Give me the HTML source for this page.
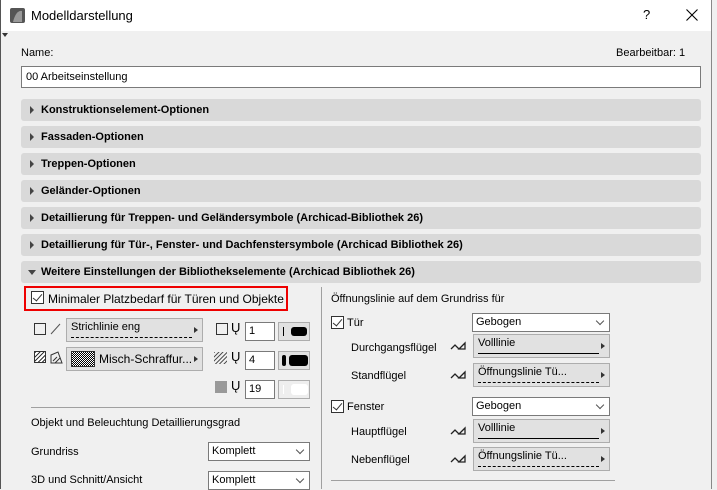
<!DOCTYPE html><html><head><meta charset="utf-8"><style>
*{box-sizing:border-box;margin:0;padding:0}
body{width:717px;height:489px;overflow:hidden;background:#f0f0f0;font-family:"Liberation Sans",sans-serif;font-size:11px;color:#000;position:relative}
.a{position:absolute;white-space:nowrap}
.hdr{position:absolute;left:21px;width:680px;height:22px;background:#d9d9d9;border-radius:3px;font-weight:bold;font-size:11px;line-height:22px;padding-left:20px}
.hdr:before{content:"";position:absolute;left:9px;top:7px;border-left:4px solid #444;border-top:4px solid transparent;border-bottom:4px solid transparent}
.hdr.o:before{left:7px;top:9px;border-top:5px solid #444;border-left:4px solid transparent;border-right:4px solid transparent;border-bottom:0}
.cb{position:absolute;width:13px;height:13px;border:1px solid #333;background:#fff}
.cb.c:after{content:"";position:absolute;left:3px;top:0px;width:4px;height:8px;border-right:1.5px solid #333;border-bottom:1.5px solid #333;transform:rotate(40deg)}
.sel{position:absolute;height:19px;background:#fff;border:1px solid #7a7a7a;line-height:17px;padding-left:3px;font-size:11px}
.sel:after{content:"";position:absolute;right:6px;top:4px;width:5px;height:5px;border-right:1px solid #555;border-bottom:1px solid #555;transform:rotate(45deg)}
.pop{position:absolute;height:24px;background:#e1e1e1;border:1px solid #adadad;font-size:11px;padding-left:4px;line-height:16px}
.pop:after{content:"";position:absolute;right:4px;top:8px;border-left:4px solid #333;border-top:3px solid transparent;border-bottom:3px solid transparent}
.ln{position:absolute;left:4px;right:10px;bottom:3px;border-bottom:1px solid #000}
.ln.d{border-bottom:1px dashed #000}
.num{position:absolute;width:30px;height:19px;background:#fff;border:1px solid #7a7a7a;padding-left:3px;line-height:17px}
.pen{position:absolute;width:32px;height:19px;background:#e1e1e1;border:1px solid #adadad}
</style></head><body>
<div class="a" style="left:0;top:0;width:717px;height:31px;background:#fff"></div>
<div class="a" style="left:0;top:0;width:1px;height:489px;background:#555"></div>
<div class="a" style="left:711px;top:0;width:1px;height:489px;background:#888"></div>
<div class="a" style="left:712px;top:0;width:5px;height:489px;background:#f0f0f0"></div>
<svg class="a" style="left:10px;top:8px" width="15" height="15"><rect width="15" height="15" rx="2" fill="#555"/><path d="M3 14 Q6 2 12 3 L12 14 Z" fill="#999"/></svg>
<div class="a" style="left:31px;top:8px;font-size:13px">Modelldarstellung</div>
<div class="a" style="left:643px;top:7px;font-size:13px">?</div>
<svg class="a" style="left:686px;top:9px" width="12" height="12"><path d="M0.5 0.5L11.5 11.5M11.5 0.5L0.5 11.5" stroke="#000" stroke-width="1.1"/></svg>
<div class="a" style="left:2px;top:33px;border-top:4px solid #333;border-left:3px solid transparent;border-right:3px solid transparent"></div>
<div class="a" style="left:21px;top:47px">Name:</div>
<div class="a" style="left:616px;top:47px">Bearbeitbar: 1</div>
<div class="a" style="left:21px;top:66px;width:680px;height:22px;background:#fff;border:1px solid #7a7a7a;padding-left:4px;line-height:20px">00 Arbeitseinstellung</div>
<div class="hdr" style="top:99px">Konstruktionselement-Optionen</div>
<div class="hdr" style="top:126px">Fassaden-Optionen</div>
<div class="hdr" style="top:153px">Treppen-Optionen</div>
<div class="hdr" style="top:180px">Geländer-Optionen</div>
<div class="hdr" style="top:207px">Detaillierung für Treppen- und Geländersymbole (Archicad-Bibliothek 26)</div>
<div class="hdr" style="top:234px">Detaillierung für Tür-, Fenster- und Dachfenstersymbole (Archicad Bibliothek 26)</div>
<div class="hdr o" style="top:261px">Weitere Einstellungen der Bibliothekselemente (Archicad Bibliothek 26)</div>
<div class="a" style="left:24px;top:286px;width:264px;height:25px;border:2px solid #e00"></div>
<div class="cb c" style="left:31px;top:291px"></div>
<div class="a" style="left:48px;top:292px;font-size:12px">Minimaler Platzbedarf für Türen und Objekte</div>
<div class="a" style="left:34px;top:323px;width:12px;height:12px;border:1px solid #333"></div>
<svg class="a" style="left:50px;top:323px" width="12" height="12"><path d="M1 11L10 1" stroke="#555"/></svg>
<div class="pop" style="left:66px;top:318px;width:137px">Strichlinie eng<div class="ln d"></div></div>
<div class="a" style="left:34px;top:351px;width:12px;height:12px;border:1px solid #333;background:repeating-linear-gradient(135deg,#333 0 1px,#fff 1px 3px)"></div>
<svg class="a" style="left:50px;top:351px" width="13" height="13"><path d="M1 12L1 4L8 1L12 12Z" fill="none" stroke="#333"/><path d="M3 10L7 6M5 12L10 7" stroke="#333"/></svg>
<div class="pop" style="left:66px;top:347px;width:137px;padding-left:98px"></div>
<div class="a" style="left:71px;top:351px;width:24px;height:16px;border:1px solid #333;background:repeating-conic-gradient(#000 0 25%,#fff 0 50%) 0 0/2px 2px"></div>
<div class="a" style="left:99px;top:352px;font-size:12px">Misch-Schraffur...</div>
<div class="a" style="left:216px;top:323px;width:12px;height:12px;border:1px solid #333"></div>
<div class="a" style="left:214px;top:352px;width:13px;height:12px;background:repeating-linear-gradient(135deg,#555 0 1px,transparent 1px 3px)"></div>
<div class="a" style="left:215px;top:381px;width:12px;height:12px;background:#999"></div>
<div class="a" style="left:231px;top:320px;font-size:13px">Ų</div>
<div class="a" style="left:231px;top:349px;font-size:13px">Ų</div>
<div class="a" style="left:231px;top:378px;font-size:13px">Ų</div>
<div class="num" style="left:245px;top:322px">1</div>
<div class="num" style="left:245px;top:351px">4</div>
<div class="num" style="left:245px;top:380px">19</div>
<div class="pen" style="left:278px;top:322px"><div class="a" style="left:4px;top:4px;width:1px;height:9px;background:#000"></div><div class="a" style="left:12px;top:4px;width:16px;height:9px;background:#000;border-radius:3px"></div></div>
<div class="pen" style="left:278px;top:351px"><div class="a" style="left:3px;top:3px;width:4px;height:11px;background:#000;border-radius:2px"></div><div class="a" style="left:10px;top:3px;width:19px;height:11px;background:#000;border-radius:3px"></div></div>
<div class="pen" style="left:278px;top:380px;background:#eee"><div class="a" style="left:4px;top:4px;width:1px;height:9px;background:#fff"></div><div class="a" style="left:12px;top:3px;width:17px;height:11px;background:#fff;border-radius:3px"></div></div>
<div class="a" style="left:31px;top:407px;width:279px;height:1px;background:#a0a0a0"></div>
<div class="a" style="left:31px;top:417px">Objekt und Beleuchtung Detaillierungsgrad</div>
<div class="a" style="left:31px;top:446px">Grundriss</div>
<div class="sel" style="left:208px;top:442px;width:102px">Komplett</div>
<div class="a" style="left:31px;top:474px">3D und Schnitt/Ansicht</div>
<div class="sel" style="left:208px;top:471px;width:102px">Komplett</div>
<div class="a" style="left:321px;top:287px;width:1px;height:202px;background:#a0a0a0"></div>
<div class="a" style="left:331px;top:293px">Öffnungslinie auf dem Grundriss für</div>
<div class="cb c" style="left:331px;top:316px"></div>
<div class="a" style="left:347px;top:317px">Tür</div>
<div class="sel" style="left:472px;top:313px;width:138px">Gebogen</div>
<div class="a" style="left:351px;top:342px">Durchgangsflügel</div>
<svg class="a" style="left:450px;top:341px" width="18" height="9"><path d="M1 8L5 4L9 8M9 8L15 2L15 8Z" fill="none" stroke="#222" stroke-width="1.3"/></svg>
<div class="pop" style="left:473px;top:334px;width:137px">Volllinie<div class="ln"></div></div>
<div class="a" style="left:351px;top:370px">Standflügel</div>
<svg class="a" style="left:450px;top:370px" width="18" height="9"><path d="M1 8L5 4L9 8M9 8L15 2L15 8Z" fill="none" stroke="#222" stroke-width="1.3"/></svg>
<div class="pop" style="left:473px;top:363px;width:137px">Öffnungslinie Tü...<div class="ln d"></div></div>
<div class="cb c" style="left:331px;top:400px"></div>
<div class="a" style="left:347px;top:401px">Fenster</div>
<div class="sel" style="left:472px;top:397px;width:138px">Gebogen</div>
<div class="a" style="left:351px;top:426px">Hauptflügel</div>
<svg class="a" style="left:450px;top:426px" width="18" height="9"><path d="M1 8L5 4L9 8M9 8L15 2L15 8Z" fill="none" stroke="#222" stroke-width="1.3"/></svg>
<div class="pop" style="left:473px;top:419px;width:137px">Volllinie<div class="ln"></div></div>
<div class="a" style="left:351px;top:454px">Nebenflügel</div>
<svg class="a" style="left:450px;top:454px" width="18" height="9"><path d="M1 8L5 4L9 8M9 8L15 2L15 8Z" fill="none" stroke="#222" stroke-width="1.3"/></svg>
<div class="pop" style="left:473px;top:447px;width:137px">Öffnungslinie Tü...<div class="ln d"></div></div>
<div class="a" style="left:331px;top:480px;width:284px;height:1px;background:#a0a0a0"></div>
</body></html>
